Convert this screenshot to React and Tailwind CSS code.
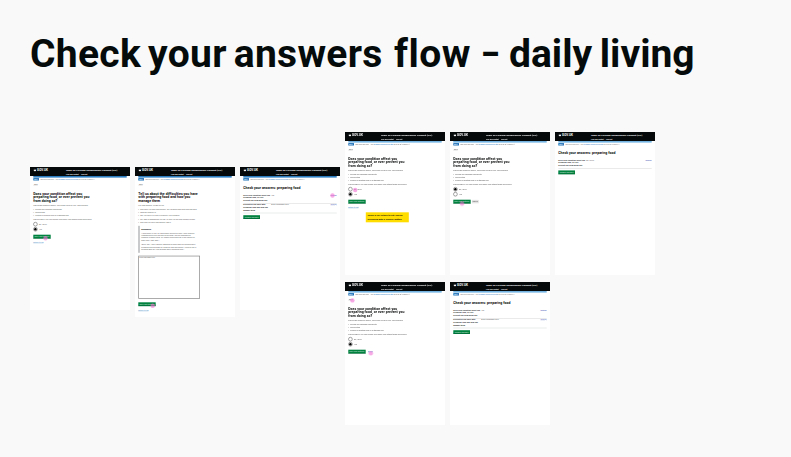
import React from 'react';

const SANS = "font-['Liberation_Sans',Arial,sans-serif]";
const HEAD = "font-['Roboto','Liberation_Sans',sans-serif]";

function Cursor({ className }) {
  return <span className={`absolute size-[44px] rounded-full bg-[#f272d4]/60 ${className}`} />;
}

function Crown() {
  return (
    <svg viewBox="0 0 36 32" className="h-[28px] w-[32px] fill-white">
      <circle cx="18" cy="4" r="3.5" />
      <circle cx="8" cy="8" r="3.5" />
      <circle cx="28" cy="8" r="3.5" />
      <path d="M3 13l6 5 5-7 4 6 4-6 5 7 6-5-4 17H7z" />
    </svg>
  );
}

// A service page laid out at 1000px wide and shown at a tenth of its size.
function Screen({ height = 'h-[143px]', bar = 'bg-[#73b3e1]', children }) {
  return (
    <section className={`w-[100px] shrink-0 overflow-hidden bg-white ${height}`}>
      <div className={`relative flex w-[1000px] origin-top-left scale-10 flex-col whitespace-nowrap text-[17px] leading-none tracking-[0.4px] text-[#444] ${SANS}`}>
        <header className={`grid h-[90px] grid-cols-[327px_1fr] bg-[#05090a] pl-[33px] font-bold text-white ${HEAD}`}>
          <div className="flex h-[60px] items-center gap-[6px] text-[30px] tracking-[0.5px]">
            <Crown />
            GOV.UK
          </div>
          <div className="flex flex-col">
            <div className="flex h-[60px] items-center text-[23.5px] tracking-[0.1px]">Apply for Personal Independence Payment (PIP)</div>
            <nav className="flex gap-[22px] text-[16px] leading-[24px]">
              <span>Help and contact</span>
              <span>Sign out</span>
            </nav>
          </div>
        </header>
        <div className="flex flex-col px-[33px]">
          <div className={`h-[16px] ${bar}`} />
          <div className="mt-[5px] flex h-[24px] items-center text-[13.5px] tracking-[0.5px]">
            <span className="flex h-[24px] w-[57px] items-center justify-center bg-[#1d70b8] font-bold text-white">BETA</span>
            <span className="ml-[14px]">
              This is a new service – your <span className="text-[#1d70b8] underline">feedback (opens in a new tab)</span> will help us to improve it.
            </span>
          </div>
          {children}
        </div>
      </div>
    </section>
  );
}

function Back() {
  return <div className="mt-[36px] h-[18px] text-[15px] underline">‹ Back</div>;
}

function Title({ className, children }) {
  return <h2 className={`text-[35px] font-bold leading-[37px] text-[#0b0c0c] ${HEAD} ${className}`}>{children}</h2>;
}

function Button({ className = 'w-[174px]', children }) {
  return (
    <span className={`flex h-[38px] items-center justify-center border-b-4 border-[#005a30] bg-[#00823f] text-[17px] text-white/80 ${className}`}>
      {children}
    </span>
  );
}

function Radio({ checked, children }) {
  return (
    <div className="flex h-[50px] items-center gap-[16px]">
      <span className="flex size-[42px] items-center justify-center rounded-full border-[4px] border-[#222]">
        {checked && <span className="size-[24px] rounded-full bg-black" />}
      </span>
      {children}
    </div>
  );
}

function Bullets({ items, className }) {
  return (
    <ul className={className}>
      {items.map((item) => (
        <li key={item} className="flex">
          <span className="w-[20px]">•</span>
          {item}
        </li>
      ))}
    </ul>
  );
}

function Question({ bar, answer = 'yes', cancel, link, children }) {
  return (
    <Screen bar={bar}>
      <Back />
      <Title className="mt-[57px] tracking-[0.3px]">
        Does your condition affect you
        <br />
        preparing food, or ever prevent you
        <br />
        from doing so?
      </Title>
      <p className="mt-[14px] h-[20px]">This means making a simple, one course meal for one. This includes:</p>
      <Bullets
        className="mt-[18px] leading-[29px]"
        items={['peeling and chopping ingredients', 'opening tins', 'cooking or heating food on a standard hob']}
      />
      <p className="mt-[16px] h-[20px]">This includes if you can prepare food safely and without being supervised.</p>
      <div className="mt-[15px]">
        <Radio checked={answer === 'no'}>No, never</Radio>
        <Radio checked={answer === 'yes'}>Yes</Radio>
      </div>
      <div className="mt-[30px] flex items-center gap-[12px]">
        <Button>Save and continue</Button>
        {cancel === 'button' && (
          <span className="flex h-[34px] w-[68px] items-center justify-center bg-[#e3e3e3] text-[17px]">Cancel</span>
        )}
        {cancel === 'link' && <span className="ml-[10px] text-[16px] text-[#1d70b8] underline">Cancel</span>}
      </div>
      {link && <div className="mt-[34px] text-[17px] text-[#1d70b8] underline">Return to list</div>}
      {children}
    </Screen>
  );
}

function Details() {
  return (
    <Screen height="h-[150px]" bar="bg-[#2b7dc0]">
      <Back />
      <Title className="mt-[57px] tracking-[0.2px]">
        Tell us about the difficulties you have
        <br />
        with preparing food and how you
        <br />
        manage them
      </Title>
      <p className="mt-[18px] h-[20px]">For each difficulty, please tell us:</p>
      <Bullets
        className="mt-[16px] leading-[31px]"
        items={[
          'how often you have this difficulty. Tell us about both good and bad days',
          'what the difficulty is',
          'why you have it or how it relates to your condition',
          'any aids or adaptations you use, or help you get from another person',
          'how long you have had difficulty with it',
        ]}
      />
      <div className="mt-[22px] h-[270px] border-l-[14px] border-[#b1b4b6] pl-[16px]">
        <h3 className={`pt-[18px] text-[22px] font-bold leading-[26px] text-[#0b0c0c] ${HEAD}`}>Examples</h3>
        <p className="mt-[18px] leading-[23.5px]">
          "About twice a year, for about three weeks at a time I have difficulty
          <br />
          remembering to turn the hob off because I get too distracted to
          <br />
          complete a simple meal. My partner supervises me in the kitchen to
          <br />
          make sure I stay safe."
        </p>
        <p className="mt-[22px] leading-[23.5px]">
          "Every day, I have difficulty standing for more than ten minutes while
          <br />
          preparing food because my joints are stiff and painful. I need to use a
          <br />
          perching stool so I can sit down while preparing food."
        </p>
      </div>
      <div className="mt-[29px] h-[432px] w-[617px] border-[7px] border-[#888] px-[6px] py-[5px] text-[15px]">Extra information here</div>
      <Button className="mt-[34px] w-[174px]">Save and continue</Button>
      <div className="mt-[36px] text-[17px] text-[#1d70b8] underline">Return to list</div>
      <Cursor className="left-[155px] top-[1365px]" />
    </Screen>
  );
}

function Answer({ lines, value }) {
  return (
    <div className="grid h-[98px] grid-cols-[280px_1fr_auto] border-b-[4px] border-[#c9cbcc] leading-[27px]">
      <div className="text-[17.5px] font-bold text-[#0b0c0c]">
        {lines.map((line) => (
          <div key={line}>{line}</div>
        ))}
      </div>
      <div>{value}</div>
      <div className="text-[#4350b5] underline">Change</div>
    </div>
  );
}

const CONDITION = ['Does your condition affect you', 'preparing food, or ever', 'prevent you from doing so?'];
const DIFFICULTY = ['Difficulties you have with', 'preparing food and how you', 'manage them'];

function Summary({ bar, value, extra, children }) {
  return (
    <Screen bar={bar}>
      <Title className="mt-[56px] tracking-[0.1px]">Check your answers: preparing food</Title>
      <div className="mt-[38px]">
        <Answer lines={CONDITION} value={value} />
        {extra && <Answer lines={DIFFICULTY} value="Extra information here" />}
      </div>
      <Button className="mt-[20px] w-[167px]">Confirm and save</Button>
      {children}
    </Screen>
  );
}

export default function App() {
  return (
    <main className="h-[457px] w-[791px] overflow-hidden bg-[#f9f9f9] pl-[30px] pt-[30px]">
      <h1 className={`flex h-[48px] items-baseline whitespace-nowrap text-[39px] font-bold leading-[48px] text-[#050b0a] ${HEAD}`}>
        <span className="w-[364px] tracking-[0.3px] [word-spacing:-3px]">Check your answers</span>
        <span className="w-[87px] tracking-[0.5px]">flow</span>
        <span className="w-[28px] origin-left scale-x-75">–</span>
        <span className="[word-spacing:-2px]">daily living</span>
      </h1>
      <div className="mt-[54px] flex gap-[5px]">
        <div className="mt-[35.4px] flex gap-[5px]">
          <Question bar="bg-[#2b7dc0]" link>
            <Cursor className="left-[133px] top-[690px]" />
          </Question>
          <Details />
          <Summary bar="bg-[#2b7dc0]" value="Yes" extra>
            <Cursor className="left-[903px] top-[263px]" />
          </Summary>
        </div>
        <div className="grid grid-cols-[repeat(3,100px)] content-start gap-x-[5px] gap-y-[7px]">
          <Question link>
            <Cursor className="left-[80px] top-[558px]" />
            <div className={`absolute left-[208px] top-[803px] h-[98px] w-[428px] bg-[#ffdd00] pl-[18px] pt-[14px] text-[24px] font-bold leading-[34px] tracking-normal text-[#0b0c0c] ${HEAD}`}>
              There is no "return to list" link as
              <br />
              accessed with a "cancel" button
            </div>
          </Question>
          <Question answer="no" cancel="button">
            <Cursor className="left-[98px] top-[693px]" />
          </Question>
          <Summary value="No, never" />
          <Question cancel="link">
            <Cursor className="left-[52px] top-[162px]" />
            <Cursor className="left-[236px] top-[690px]" />
          </Question>
          <Summary value="Yes" extra />
        </div>
      </div>
    </main>
  );
}
